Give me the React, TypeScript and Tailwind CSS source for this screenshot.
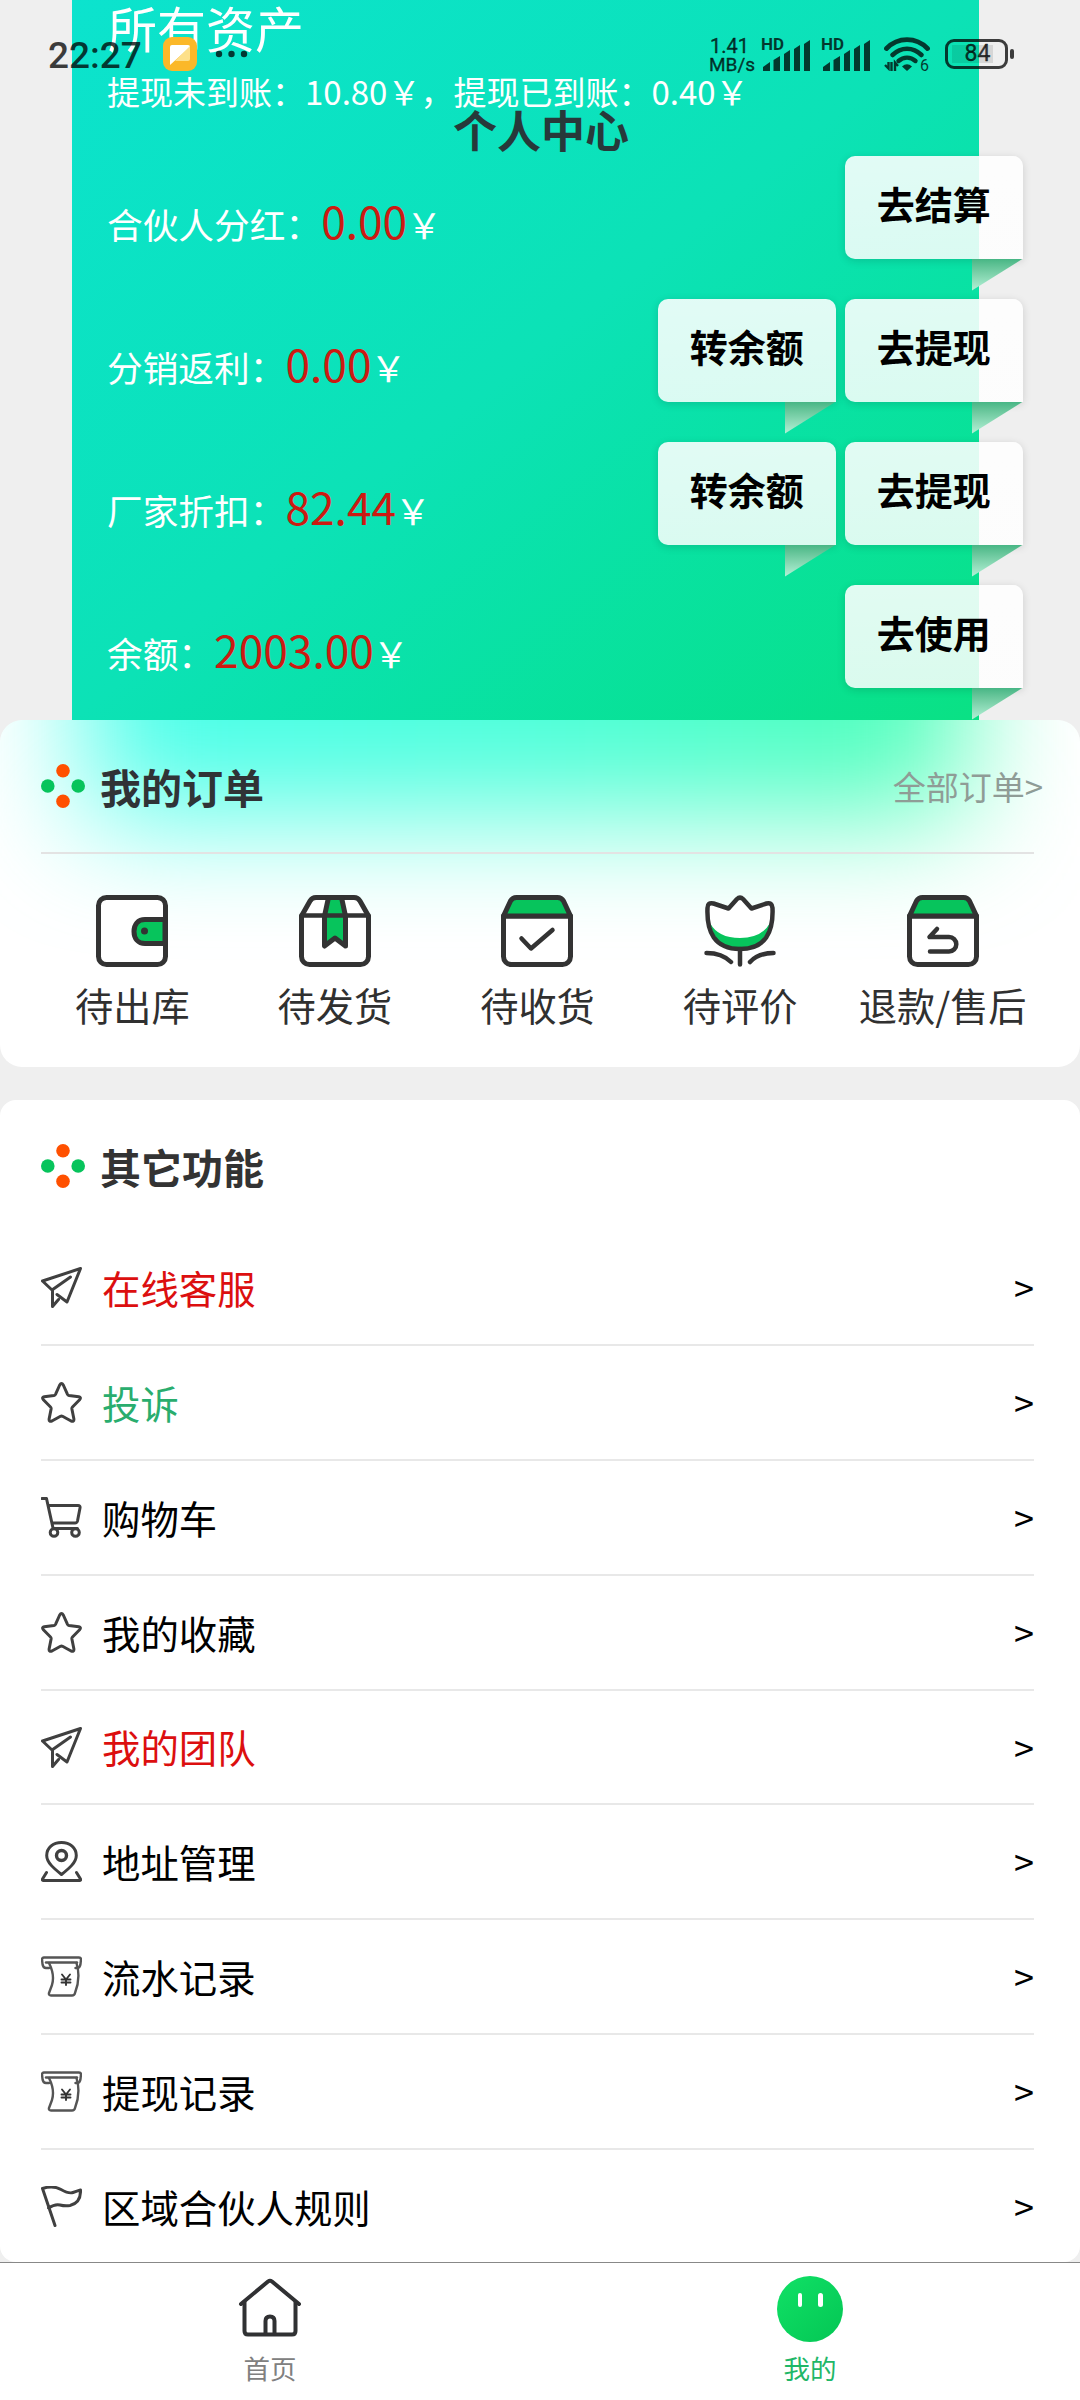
import type { ReactNode } from "react";

const SANS = "font-['Noto_Sans_CJK_SC',sans-serif]";

function SignalBars() {
  return (
    <svg width="48" height="31" viewBox="0 0 48 31" fill="currentColor">
      <path d="M0 31v-4l7-5v9z" />
      <path d="M10.5 31V20l6.5-4v15z" />
      <path d="M21 31V14l6-4v21z" />
      <path d="M31 31V9l6-4v26z" />
      <path d="M41 31V4l6-4v31z" />
    </svg>
  );
}

function WifiIcon() {
  return (
    <svg width="46" height="34" viewBox="0 0 46 34" fill="none" stroke="currentColor">
      <path d="M2.500 11.500C14-.3 32-.3 43.500 11.500" strokeWidth="4.800" strokeLinecap="round" />
      <path d="M8.500 18C17 9.700 29 9.700 37.500 18" strokeWidth="4.600" strokeLinecap="round" />
      <path d="M14.500 24C19.500 19.500 26.500 19.500 31.500 24" strokeWidth="4.400" strokeLinecap="round" />
      <path d="M18 29.500Q23 25 28 29.500L23 34z" fill="currentColor" stroke="none" />
      <path d="M1 28l3.500 3.500V25M7.500 25v9M11 34v-8.500l3 3.500" strokeWidth="2.400" />
    </svg>
  );
}

function StatusBar() {
  return (
    <div className="absolute inset-x-0 top-0 z-20 flex h-[108px] items-start justify-between pl-[48px] pr-[66px] pt-[37px] font-['Roboto',sans-serif] text-black/75">
      <div className="flex items-start">
        <span className="w-[96px] text-[37px] font-medium leading-[37px]">22:27</span>
        <svg className="ml-[19px]" width="34" height="34" viewBox="0 0 34 34">
          <rect width="34" height="34" rx="9" fill="#fbb829" />
          <path d="M9 8h16a2 2 0 0 1 2 2L7 28V10a2 2 0 0 1 2-2z" fill="#fff" />
          <path d="M27 9v13a2 2 0 0 1-2 2H12z" fill="#fde08a" />
        </svg>
        <svg className="ml-[18px] mt-[13px]" width="34" height="8" viewBox="0 0 34 8" fill="currentColor">
          <circle cx="4" cy="4" r="3.200" />
          <circle cx="16.500" cy="4" r="3.200" />
          <circle cx="29" cy="4" r="3.200" />
        </svg>
      </div>
      <div className="flex items-start">
        <div className="w-[52px] text-[20px] leading-[18.500px] [-webkit-text-stroke:0.4px_currentColor]">
          <div className="pl-px">1.41</div>
          <div className="text-[19px]">MB/s</div>
        </div>
        <div className="relative w-[60px] pl-[2px] pt-[3px]">
          <span className="absolute left-0 top-0 text-[17px] font-bold leading-[14px]">HD</span>
          <SignalBars />
        </div>
        <div className="relative w-[63px] pl-[2px] pt-[3px]">
          <span className="absolute left-0 top-0 text-[17px] font-bold leading-[14px]">HD</span>
          <SignalBars />
        </div>
        <div className="relative w-[61px]">
          <WifiIcon />
          <span className="absolute left-[36px] top-[22px] text-[16px] leading-[14px]">6</span>
        </div>
        <div className="flex items-center pt-[2px]">
          <div className="flex h-[30px] w-[63px] items-center rounded-[9px] border-3 border-current pl-[4px]">
            <div className="flex h-[18px] w-[41px] items-center justify-center bg-black/10 pl-[10px] text-[23px] leading-[18px] [-webkit-text-stroke:0.4px_currentColor]">
              84
            </div>
          </div>
          <div className="ml-[2px] h-[10px] w-[4px] rounded-[2px] bg-current" />
        </div>
      </div>
    </div>
  );
}

function ActionButton({ label }: { label: string }) {
  return (
    <button className="relative flex h-[102.500px] w-[178.500px] items-center justify-center rounded-[10px] rounded-br-none bg-linear-to-b from-white/88 to-white/85 pb-[10px] text-[38px] font-bold text-black shadow-[0_2px_8px_rgba(0,0,0,0.14)]">
      {label}
      <span className="absolute right-0 top-full h-[32px] w-[51px] bg-linear-to-b from-[#47b685] to-[#b4f2d8] [clip-path:polygon(0_0,100%_0,0_100%)]" />
    </button>
  );
}

const assets = [
  { label: "合伙人分红：", value: "0.00", actions: ["去结算"] },
  { label: "分销返利：", value: "0.00", actions: ["转余额", "去提现"] },
  { label: "厂家折扣：", value: "82.44", actions: ["转余额", "去提现"] },
  { label: "余额：", value: "2003.00", actions: ["去使用"] },
];

function AssetsPanel() {
  return (
    <section className="h-[720px] pl-[72px] pr-[101px]">
      <div className="h-full bg-linear-to-br from-[#0ce3ce] via-[#0ce2b6] to-[#0ae184] pl-[35px] text-white">
        <h2 className="h-[62px] pl-px text-[49px] leading-[54px]">所有资产</h2>
        <p className="h-[94px] whitespace-nowrap text-[33px] leading-[59px]">
          提现未到账：10.80￥，提现已到账：0.40￥
        </p>
        {assets.map((a) => (
          <div key={a.label} className="-mr-[44px] flex h-[143px] items-start justify-between">
            <div className="whitespace-nowrap text-[35.700px] leading-[135px]">
              {a.label}
              <span className="mr-[-1px] text-[44.300px] leading-none text-[#cc1a12]">{a.value}</span>￥
            </div>
            <div className="flex gap-[8.500px]">
              {a.actions.map((t) => (
                <ActionButton key={t} label={t} />
              ))}
            </div>
          </div>
        ))}
      </div>
    </section>
  );
}

function Dots() {
  return (
    <svg className="-mt-[2px]" width="44" height="44" viewBox="0 0 44 44">
      <circle cx="22" cy="6.800" r="6.800" fill="#ff5000" />
      <circle cx="22" cy="37.200" r="6.800" fill="#ff5000" />
      <circle cx="6.800" cy="22" r="6.800" fill="#07c45c" />
      <circle cx="37.200" cy="22" r="6.800" fill="#07c45c" />
    </svg>
  );
}

function OrderSvg({ children }: { children: ReactNode }) {
  return (
    <svg width="72" height="72" viewBox="0 0 72 72" fill="none" stroke="#333" strokeWidth="5" strokeLinecap="round" strokeLinejoin="round">
      {children}
    </svg>
  );
}

const GREEN = "#07c45c";

const orders = [
  {
    label: "待出库",
    icon: (
      <OrderSvg>
        <rect x="2.500" y="2.500" width="67" height="67" rx="8" fill="#fff" />
        <path d="M69 24.500H49c-7 0-11 5-11 12s4 12 11 12h20z" fill={GREEN} />
        <circle cx="48.500" cy="36" r="3.500" fill="#333" stroke="none" />
      </OrderSvg>
    ),
  },
  {
    label: "待发货",
    icon: (
      <OrderSvg>
        <path d="M2.500 21L11 6q2-3.500 6-3.500h38q4 0 6 3.500l8.500 15v40.500a8 8 0 0 1-8 8h-51a8 8 0 0 1-8-8z" fill="#fff" />
        <path d="M29.500 2.500h13l4 18.500v30L36 43 25.500 51V21z" fill={GREEN} />
        <path d="M2.500 20.500h67" strokeWidth="4.500" />
      </OrderSvg>
    ),
  },
  {
    label: "待收货",
    icon: (
      <OrderSvg>
        <path d="M2.500 21h67v40.500a8 8 0 0 1-8 8h-51a8 8 0 0 1-8-8z" fill="#fff" />
        <path d="M2.500 21L9.500 6q2-3.500 6-3.500h41q4 0 6 3.500l7 15z" fill={GREEN} />
        <path d="M20.500 43.500L30 53.500 51.500 35" strokeWidth="4.500" />
      </OrderSvg>
    ),
  },
  {
    label: "待评价",
    icon: (
      <OrderSvg>
        <path d="M3.500 13q0-6 6-4.500l15 5L33 4q3-3 6 0l8.500 9.500 15-5q5.500-1.500 6 4.500c1 24-7 41-32.500 41S2.500 37 3.500 13z" fill="#fff" stroke="none" />
        <path d="M6 28q8 15 30 15t30-15q-5 25.500-30 25.500T6 28z" fill={GREEN} stroke="none" />
        <path d="M3.500 13q0-6 6-4.500l15 5L33 4q3-3 6 0l8.500 9.500 15-5q5.500-1.500 6 4.500c1 24-7 41-32.500 41S2.500 37 3.500 13z" strokeWidth="4.500" />
        <path d="M36 54v15.500M2.500 58Q18 58 27 67M69.500 58Q54 58 46 67" strokeWidth="4.500" />
      </OrderSvg>
    ),
  },
  {
    label: "退款/售后",
    icon: (
      <OrderSvg>
        <path d="M2.500 21h67v40.500a8 8 0 0 1-8 8h-51a8 8 0 0 1-8-8z" fill="#fff" />
        <path d="M2.500 21L9.500 6q2-3.500 6-3.500h41q4 0 6 3.500l7 15z" fill={GREEN} />
        <path d="M30 34l-7.500 8H42a7.300 7.300 0 0 1 0 14.600H23" strokeWidth="4.500" />
      </OrderSvg>
    ),
  },
];

function OrdersCard() {
  return (
    <section className="relative h-[347px] overflow-hidden rounded-[22px] bg-white px-[41px]">
      <div className="absolute -top-[260px] left-[85px] h-[356px] w-[880px] bg-linear-to-r from-[#4affec] via-[#4cffda] to-[#50ffb6] blur-[60px]" />
      <div className="relative -mr-[6px] flex h-[132px] items-center pt-px">
        <Dots />
        <h3 className="ml-[15px] text-[41px] font-bold leading-none text-[#303336]">我的订单</h3>
        <span className="ml-auto pr-[2px] text-[33px] leading-none text-[#8f9c96]">全部订单&gt;</span>
      </div>
      <div className="relative mr-[5px] h-[2px] bg-[#e3e3e3]" />
      <div className="relative -ml-[10px] mr-[-5px] grid grid-cols-5 pt-[41px]">
        {orders.map((o) => (
          <div key={o.label} className="flex flex-col items-center">
            {o.icon}
            <span className="mt-[8px] whitespace-nowrap text-[38.200px] leading-[60px] text-[#303030]">{o.label}</span>
          </div>
        ))}
      </div>
    </section>
  );
}

function LineSvg({ children }: { children: ReactNode }) {
  return (
    <svg width="41" height="41" viewBox="0 0 41 41" fill="none" stroke="#404040" strokeWidth="3" strokeLinecap="round" strokeLinejoin="round">
      {children}
    </svg>
  );
}

const plane = (
  <LineSvg>
    <path d="M1.500 14L39.500 1.500 26 35l-10-7.500M1.500 14l9.500 9L29.500 10M11.500 23v16.500l6-7" />
  </LineSvg>
);
const star = (
  <LineSvg>
    <path d="M18.700 3q1.800-3 3.600 0l4.200 9.300q.5 1 1.500 1.200l9.800 1.200q2.800.7.800 3L31.500 25q-.8.800-.6 2l2 10q.2 3.200-2.800 2l-8.600-4.700q-1-.5-2 0L10.900 39q-3 1.200-2.800-2l2-10q.2-1.200-.6-2L2.400 17.700q-2-2.300.8-3L13 13.500q1-.2 1.500-1.200z" />
  </LineSvg>
);
const cart = (
  <LineSvg>
    <path d="M1 1.500h4.500L12 31M8 8.500h29q2.500 0 2 2.500l-2.500 13q-.5 2-2.500 2H11.500M12 31.500h24.500" />
    <circle cx="13" cy="35.500" r="3.800" />
    <circle cx="34.500" cy="35.500" r="3.800" />
  </LineSvg>
);
const pin = (
  <LineSvg>
    <path d="M20.500 33.500C13 27.500 5.700 21.500 5.700 14.500 5.700 7 12 1.500 20.500 1.500S35.300 7 35.300 14.500c0 7-7.300 13-14.800 19z" />
    <circle cx="20.500" cy="14.500" r="5" strokeWidth="3.400" />
    <path d="M5.500 31.500l-4 6.500q-.5 1.500 1 1.500h36q1.500 0 1-1.500l-4-6.500" />
  </LineSvg>
);
const receipt = (
  <LineSvg>
    <g strokeWidth="2.400" stroke="#555">
      <path d="M8 12H5Q2 12 1.500 8L1 3.500Q1 1.500 3 1.500h35q2 0 2 2L39.500 8q-.5 4-3.500 4h-1.500" />
      <path d="M5 6.500h31" />
      <path d="M8 7q6 12 3 22l-3 8q-.5 2.500 2 2.500h21q2.500 0 3-2.500 6-15 1.500-30" />
      <path d="M21 18.500l4 5 4-5M25 23.500V29M20.500 23.500h9M20.500 26.500h9" stroke="#333" strokeWidth="1.900" />
    </g>
  </LineSvg>
);
const flag = (
  <LineSvg>
    <path d="M14 39.500L1.500 2.500Q12-1 20 3.500t12 3 7.500-2.500Q40 17 29 19.500q-5 .8-10-.5t-11.500 3" />
  </LineSvg>
);

const features = [
  { label: "在线客服", icon: plane, tone: "text-[#dc0f0f]" },
  { label: "投诉", icon: star, tone: "text-[#29ad6e]" },
  { label: "购物车", icon: cart, tone: "text-black" },
  { label: "我的收藏", icon: star, tone: "text-black" },
  { label: "我的团队", icon: plane, tone: "text-[#dc0f0f]" },
  { label: "地址管理", icon: pin, tone: "text-black" },
  { label: "流水记录", icon: receipt, tone: "text-black" },
  { label: "提现记录", icon: receipt, tone: "text-black" },
  { label: "区域合伙人规则", icon: flag, tone: "text-black" },
];

function FeaturesCard() {
  return (
    <section className="mt-[33px] h-[1162px] rounded-[16px] bg-white pl-[41px] pr-[46px]">
      <div className="flex h-[131.500px] items-center pt-[2px]">
        <Dots />
        <h3 className="ml-[15px] text-[41px] font-bold leading-none text-[#333]">其它功能</h3>
      </div>
      {features.map((f) => (
        <div key={f.label} className="flex h-[114.800px] items-center border-b-2 border-[#e8e8e8] last:border-transparent">
          {f.icon}
          <span className={`ml-[20px] pb-px text-[38.400px] leading-none ${f.tone}`}>{f.label}</span>
          <span className="ml-auto pb-[3px] text-[36px] leading-none text-black">&gt;</span>
        </div>
      ))}
    </section>
  );
}

function TabBar() {
  return (
    <nav className="absolute inset-x-0 bottom-0 z-10 grid h-[138px] grid-cols-2 border-t border-[#888] bg-white text-[26.500px]">
      <div className="flex flex-col items-center pt-[13px]">
        <svg width="66" height="66" viewBox="0 0 66 66" fill="none" stroke="#303133" strokeWidth="4" strokeLinecap="round" strokeLinejoin="round">
          <path d="M4 28L31 5.500q2-1.500 4 0L62 28" />
          <path d="M7.500 26v29q0 3.500 3.500 3.500h44q3.500 0 3.500-3.500V26" />
          <path d="M28.500 58V45q0-4.500 4.500-4.500t4.500 4.500v13" />
        </svg>
        <span className="mt-[11px] leading-[30px] text-[#808080]">首页</span>
      </div>
      <div className="flex flex-col items-center pt-[13px]">
        <div className="flex h-[66px] w-[66px] justify-center gap-[16px] rounded-full bg-linear-to-br from-[#10e166] to-[#04c654] pt-[17px]">
          <i className="h-[14px] w-[4.500px] rounded-full bg-white" />
          <i className="h-[14px] w-[4.500px] rounded-full bg-white" />
        </div>
        <span className="mt-[11px] leading-[30px] text-[#1fb768]">我的</span>
      </div>
    </nav>
  );
}

export default function App() {
  return (
    <div className={`relative h-[2400px] w-[1080px] overflow-hidden bg-[#efefef] ${SANS}`}>
      <StatusBar />
      <h1 className="absolute inset-x-0 top-[97px] z-10 pl-[2px] text-center text-[44px] font-bold leading-[64px] text-[#27393a]">
        个人中心
      </h1>
      <AssetsPanel />
      <OrdersCard />
      <FeaturesCard />
      <TabBar />
    </div>
  );
}
